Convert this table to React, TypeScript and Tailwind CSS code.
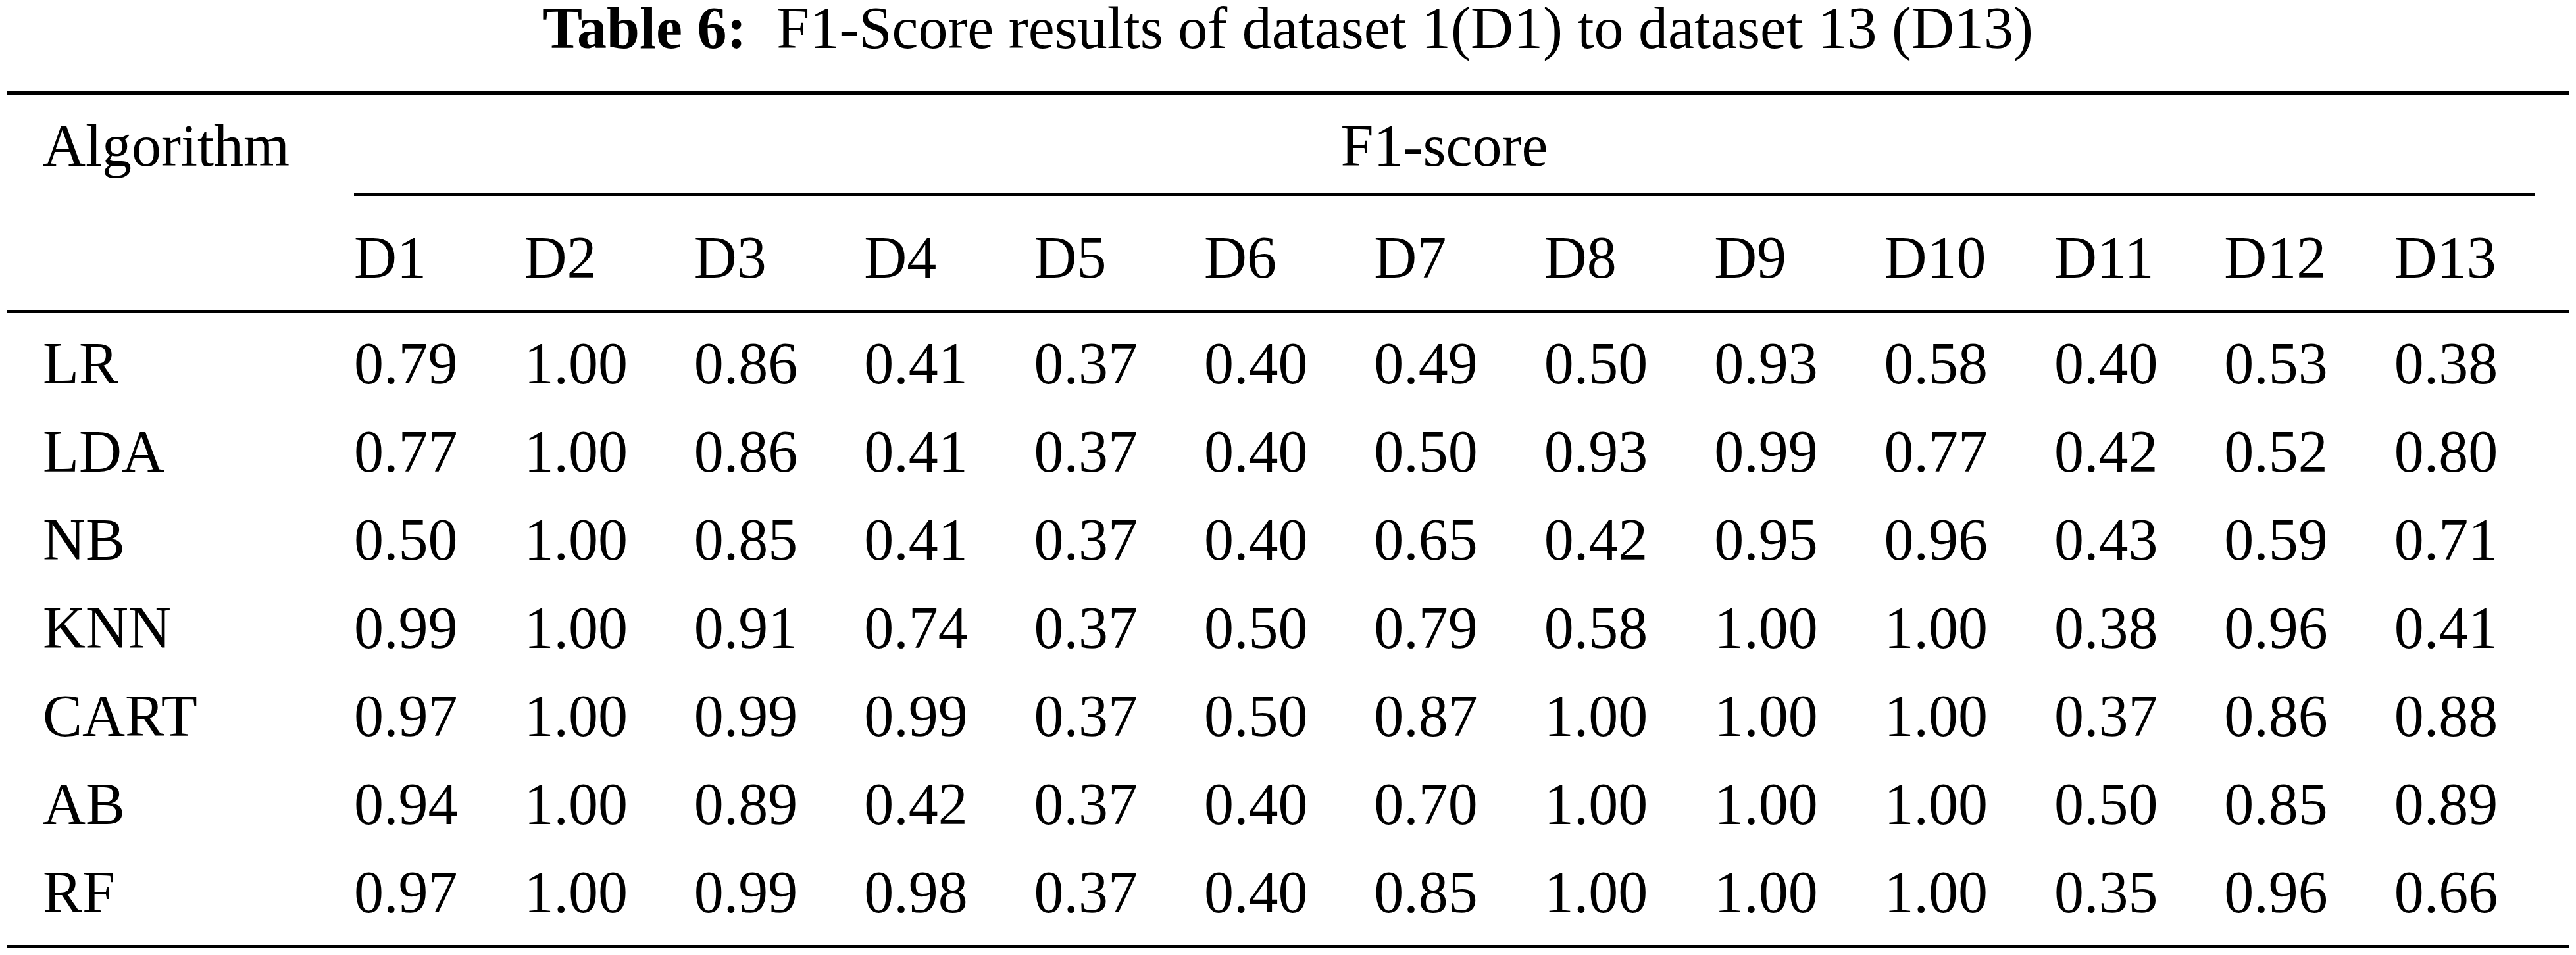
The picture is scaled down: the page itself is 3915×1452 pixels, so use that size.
const datasets = ['D1', 'D2', 'D3', 'D4', 'D5', 'D6', 'D7', 'D8', 'D9', 'D10', 'D11', 'D12', 'D13'];

const rows: { name: string; scores: string[] }[] = [
  { name: 'LR', scores: ['0.79', '1.00', '0.86', '0.41', '0.37', '0.40', '0.49', '0.50', '0.93', '0.58', '0.40', '0.53', '0.38'] },
  { name: 'LDA', scores: ['0.77', '1.00', '0.86', '0.41', '0.37', '0.40', '0.50', '0.93', '0.99', '0.77', '0.42', '0.52', '0.80'] },
  { name: 'NB', scores: ['0.50', '1.00', '0.85', '0.41', '0.37', '0.40', '0.65', '0.42', '0.95', '0.96', '0.43', '0.59', '0.71'] },
  { name: 'KNN', scores: ['0.99', '1.00', '0.91', '0.74', '0.37', '0.50', '0.79', '0.58', '1.00', '1.00', '0.38', '0.96', '0.41'] },
  { name: 'CART', scores: ['0.97', '1.00', '0.99', '0.99', '0.37', '0.50', '0.87', '1.00', '1.00', '1.00', '0.37', '0.86', '0.88'] },
  { name: 'AB', scores: ['0.94', '1.00', '0.89', '0.42', '0.37', '0.40', '0.70', '1.00', '1.00', '1.00', '0.50', '0.85', '0.89'] },
  { name: 'RF', scores: ['0.97', '1.00', '0.99', '0.98', '0.37', '0.40', '0.85', '1.00', '1.00', '1.00', '0.35', '0.96', '0.66'] },
];

const cols = 'grid grid-cols-[528px_repeat(12,258.4px)_1fr]';

export default function App() {
  return (
    <div className="min-h-screen bg-white text-black font-['Liberation_Serif','Times_New_Roman',serif] text-[90px]">
      <div className="ml-[10px] w-[3895px]">
        {/* caption */}
        <div className="h-[86px] mb-[53px] leading-[86px] text-center whitespace-nowrap">
          <span className="font-bold mr-[46px]">Table 6:</span>F1-Score results of dataset 1(D1) to dataset 13 (D13)
        </div>

        <div className="border-t-[5px] border-b-[5px] border-black">
          {/* header */}
          <div className="flex leading-[100px]">
            <div className="w-[528px] pl-[55px] pt-[28px]">Algorithm</div>
            <div className="flex-1 mr-[53px] pt-[28px] pb-[21px] text-center border-b-[5px] border-black">F1-score</div>
          </div>
          <div className={`${cols} leading-[100px] pt-[44px] pb-[29px] border-b-[5px] border-black`}>
            <div />
            {datasets.map((d) => (
              <div key={d}>{d}</div>
            ))}
          </div>

          {/* body */}
          <div className="pt-[10px] pb-[13px]">
            {rows.map((r) => (
              <div key={r.name} className={`${cols} leading-[134px]`}>
                <div className="pl-[55px]">{r.name}</div>
                {r.scores.map((s, i) => (
                  <div key={i}>{s}</div>
                ))}
              </div>
            ))}
          </div>
        </div>
      </div>
    </div>
  );
}
